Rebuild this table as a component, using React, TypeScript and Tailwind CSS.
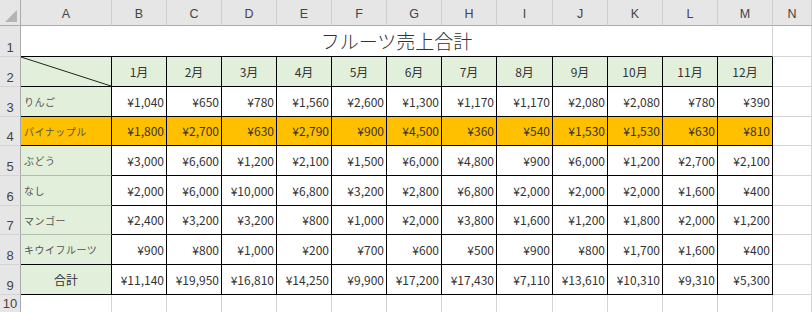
import React from "react";

const letters = ["A", "B", "C", "D", "E", "F", "G", "H", "I", "J", "K", "L", "M", "N"];

const fruits = [
  { name: "りんご", values: ["1,040", "650", "780", "1,560", "2,600", "1,300", "1,170", "1,170", "2,080", "2,080", "780", "390"] },
  { name: "パイナップル", values: ["1,800", "2,700", "630", "2,790", "900", "4,500", "360", "540", "1,530", "1,530", "630", "810"], highlight: true },
  { name: "ぶどう", values: ["3,000", "6,600", "1,200", "2,100", "1,500", "6,000", "4,800", "900", "6,000", "1,200", "2,700", "2,100"] },
  { name: "なし", values: ["2,000", "6,000", "10,000", "6,800", "3,200", "2,800", "6,800", "2,000", "2,000", "2,000", "1,600", "400"] },
  { name: "マンゴー", values: ["2,400", "3,200", "3,200", "800", "1,000", "2,000", "3,800", "1,600", "1,200", "1,800", "2,000", "1,200"] },
  { name: "キウイフルーツ", values: ["900", "800", "1,000", "200", "700", "600", "500", "900", "800", "1,700", "1,600", "400"] },
];

const totals = ["11,140", "19,950", "16,810", "14,250", "9,900", "17,200", "17,430", "7,110", "13,610", "10,310", "9,310", "5,300"];

const font = "font-['Noto_Sans_CJK_JP',sans-serif]";
const rowHead =
  "flex items-end justify-center pb-[2px] bg-[#e6e6e6] border-r border-b border-r-[#ababab] border-b-[#d4d4d4] text-[13px] leading-none text-[#444] font-['Liberation_Sans',sans-serif]";
const plain = "border-r border-b border-[#d4d4d4] bg-white";
const dataCell =
  "flex items-center justify-end pr-[2px] border-r border-b border-black text-[12px] text-[#333]";

function RowHead({ n }: { n: number }) {
  return <div className={rowHead}>{n}</div>;
}

export default function App() {
  return (
    <div className={`h-[312px] w-[812px] overflow-hidden bg-white ${font}`}>
      <div className="grid grid-cols-[21px_91px_repeat(7,55px)_56px_repeat(4,55px)_39px] grid-rows-[26px_31px_30px_30px_29px_30px_30px_29px_30px_30px_18px]">
        {/* column headers */}
        <div className="relative bg-[#e6e6e6] border-r border-b border-r-[#ababab] border-b-[#ababab]">
          <svg className="absolute right-[3px] bottom-[3px]" width="12" height="12" viewBox="0 0 12 12">
            <polygon points="12,0 12,12 0,12" fill="#b4b4b4" />
          </svg>
        </div>
        {letters.map((l) => (
          <div
            key={l}
            className="flex items-end justify-center pb-[5px] bg-[#e6e6e6] border-r border-b border-r-[#cfcfcf] border-b-[#ababab] text-[12.5px] leading-none text-[#444] font-['Liberation_Sans',sans-serif]"
          >
            {l}
          </div>
        ))}

        {/* row 1 */}
        <RowHead n={1} />
        <div className="col-span-13 flex items-center justify-center border-r border-r-[#d4d4d4] border-b border-b-black text-[19px] font-light text-[#333]">
          フルーツ売上合計
        </div>
        <div className={plain} />

        {/* row 2 */}
        <RowHead n={2} />
        <div className="relative border-r border-b border-black bg-[#e2efda]">
          <svg className="absolute inset-0 h-full w-full" preserveAspectRatio="none" viewBox="0 0 90 29">
            <line x1="0" y1="0" x2="90" y2="29" stroke="#222" strokeWidth="1" vectorEffect="non-scaling-stroke" />
          </svg>
        </div>
        {Array.from({ length: 12 }, (_, i) => (
          <div key={i} className="flex items-center justify-center border-r border-b border-black bg-[#e2efda] text-[12px] text-[#333]">
            {i + 1}月
          </div>
        ))}
        <div className={plain} />

        {/* fruit rows */}
        {fruits.map((f, r) => {
          const bg = f.highlight ? "bg-[#ffc000]" : "bg-[#e2efda]";
          const cellBg = f.highlight ? "bg-[#ffc000]" : "bg-white";
          const bottom = r <= 1 || r === 5 ? "border-b-black" : "border-b-[#b4bcae]";
          return (
            <React.Fragment key={f.name}>
              <RowHead n={r + 3} />
              <div className={`flex items-center pl-[3px] border-r border-b border-r-black ${bottom} ${bg} text-[10px] tracking-[0.5px] text-[#555]`}>
                {f.name}
              </div>
              {f.values.map((v, i) => (
                <div key={i} className={`${dataCell} ${cellBg}`}>
                  ¥{v}
                </div>
              ))}
              <div className={plain} />
            </React.Fragment>
          );
        })}

        {/* totals */}
        <RowHead n={9} />
        <div className="flex items-center justify-center border-r border-b border-black bg-[#e2efda] text-[12px] text-[#333]">
          合計
        </div>
        {totals.map((v, i) => (
          <div key={i} className={`${dataCell} bg-white`}>
            ¥{v}
          </div>
        ))}
        <div className={plain} />

        {/* row 10, cut by the window edge */}
        <RowHead n={10} />
        {letters.map((l) => (
          <div key={l} className={plain} />
        ))}
      </div>
    </div>
  );
}
